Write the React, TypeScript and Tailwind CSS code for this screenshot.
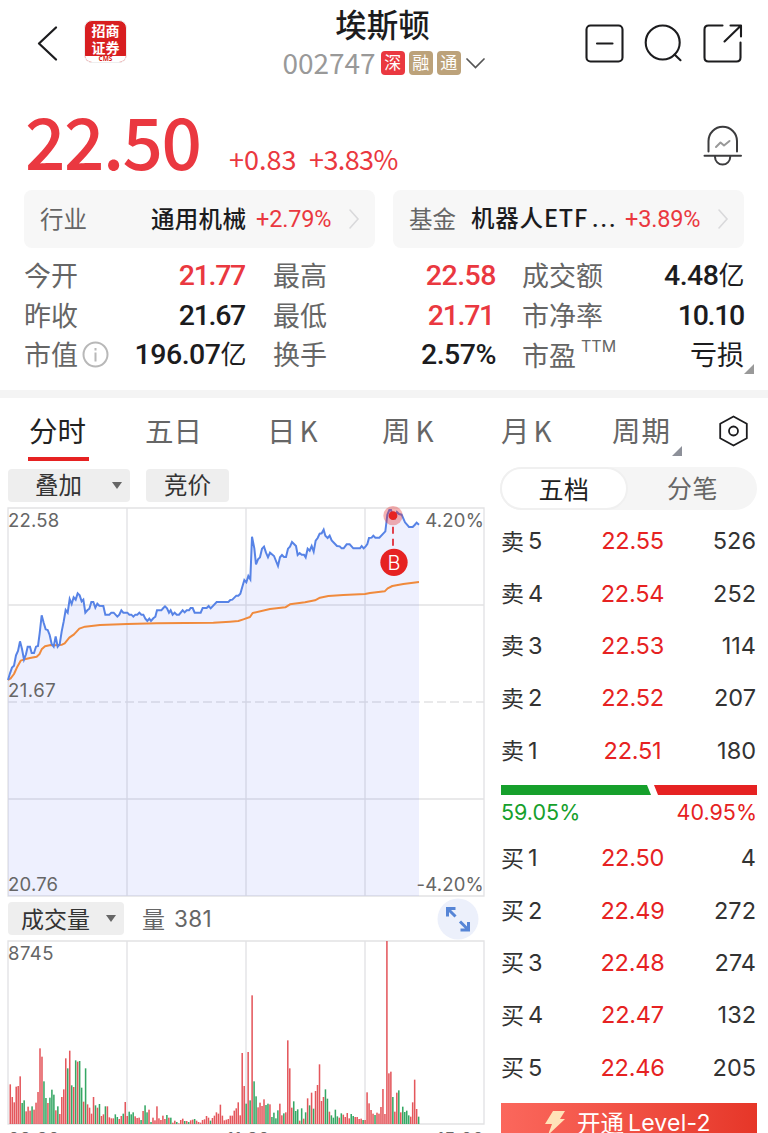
import React from 'react';

const PRICE =
  '24,540 30,520 36,503 42,497 48,466 54,453 60,424 66,447 72,479 78,463 83,440 90,440 95,459 102,459 108,440 114,438 119,400 125,346 131,368 137,388 143,390 149,405 155,432 161,440 167,409 173,440 179,433 185,395 191,365 197,330 203,338 209,297 215,312 221,292 227,299 233,280 239,286 245,304 250,299 256,338 262,331 268,326 274,306 280,306 286,323 292,311 298,317 310,318 316,344 328,344 334,338 341,338 352,350 358,344 364,331 370,338 382,338 388,344 394,344 400,350 406,344 412,344 418,338 424,344 430,344 436,356 442,363 448,356 453,363 460,355 466,350 471,331 484,331 490,324 495,319 501,325 507,338 512,331 518,344 524,338 530,344 537,344 548,331 554,337 560,331 567,331 572,324 578,324 584,338 602,338 608,324 620,324 626,318 632,325 650,306 685,306 691,300 697,299 709,287 715,287 721,281 727,260 733,240 739,247 745,228 751,238 756,110 763,145 768,193 774,178 780,172 786,146 792,140 798,158 804,172 810,158 822,168 834,198 840,172 846,165 852,171 858,171 864,146 870,140 876,126 882,132 888,138 893,165 899,159 905,164 912,164 917,172 923,146 929,152 935,138 941,155 947,122 953,114 959,101 965,100 971,89 976,107 983,114 989,107 995,121 1011,138 1019,139 1025,145 1031,145 1040,133 1049,133 1060,145 1080,145 1085,138 1091,145 1097,139 1102,132 1107,114 1115,113 1120,107 1126,113 1138,113 1156,94 1162,44 1168,30 1173,30 1179,50 1185,55 1191,36 1197,42 1205,44 1215,67 1227,81 1238,81 1244,75 1250,68 1257,74';

const AVERAGE =
  '24,540 32,535 42,522 52,500 62,482 74,478 90,474 110,470 118,463 125,448 135,439 152,435 165,436 186,434 194,430 208,413 222,403 238,386 255,380 300,375 382,372 470,370 640,368 690,365 715,363 730,358 750,351 758,339 810,327 856,322 870,313 915,307 945,301 960,293 985,288 1030,285 1095,282 1110,279 1154,274 1163,265 1177,258 1210,252 1257,246';

const VOLUME =
  '643r 681r 697r 650r 648r 619r 699g 691g 724r 710r 722r 709g 719r 698r 666r 535r 560r 634g 684g 699r 683g 659g 674g 721r 709g 732r 681r 658r 565r 595g 542r 646g 651r 571g 575r 573g 653g 695r 595g 703r 713r 731r 681r 706g 713r 702g 738r 733r 709g 709r 742r 745r 745r 733g 741g 747r 738r 731g 696r 738r 725g 733g 727g 739r 744r 743r 750g 723r 706g 727g 719r 756g 743r 751r 709r 745r 750r 737r 747r 735g 743r 743g 758r 752r 756g 760r 750r 746r 753g 753r 756g 751r 749r 747g 752r 756r 758r 750r 748r 738r 743r 752g 744r 737r 727r 731r 704r 737r 751r 749r 747r 737r 737r 722r 715r 697r 736r 549r 648r 701g 546r 691g 376r 634g 679g 712r 698r 708r 688r 705g 701g 703r 741g 728g 745g 721g 701r 736r 730g 727r 511r 595r 713r 694g 723g 718g 752r 715g 746r 727g 685r 706g 668r 716g 663r 645r 583r 693r 681r 658g 686g 725r 736g 743g 719g 739g 743r 730g 734r 741r 729r 745r 732g 738g 741r 741r 747r 746r 750g 750r 667r 700r 720r 731r 735g 728r 731r 711r 657r 732r 213r 610r 605r 681g 725r 668r 661g 727r 710g 726g 722g 736g 740r 697r 629r 717r 740g'.split(
    ' ',
  );

function Header() {
  return (
    <header className="flex h-[90px] items-start">
      <svg className="ml-[36px] mt-[24px] h-10 w-[24px]" viewBox="0 0 24 40" fill="none" stroke="#1c1c1e" strokeWidth="2.3" strokeLinecap="round" strokeLinejoin="round">
        <path d="M20 3.5 3 19.5 20 35.5" />
      </svg>
      <div className="ml-[24px] mt-[20px] flex h-[43px] w-[43px] flex-col overflow-hidden rounded-[8px] border border-[#eeeeee] bg-[#d81e20] text-center font-bold text-white">
        <div className="h-[35px] pt-[1px] text-[14px] leading-[16.5px]">
          招商
          <br />
          证券
        </div>
        <div className="flex-1 bg-white font-['Open_Sans'] text-[6.5px] leading-[6px] text-[#d81e20]">CMS</div>
      </div>
      <div className="ml-[128px] mt-[4px] flex w-[257px] flex-col items-center">
        <h1 className="-ml-[2px] h-[42px] text-[31.5px] font-medium leading-[39px] text-[#1c1c1e]">埃斯顿</h1>
        <div className="flex h-[34px] items-center">
          <span className="mr-[5px] text-[28px] leading-[30px] text-[#999]"><span className="relative -top-[1px]">002747</span></span>
          <span className="mr-[4px] h-6 w-6 rounded-[4px] bg-[#ea3840] text-center text-[17px] leading-[22px] text-white">深</span>
          <span className="mr-[4px] h-6 w-6 rounded-[4px] bg-[#bca27a] text-center text-[17px] leading-[22px] text-white">融</span>
          <span className="h-6 w-6 rounded-[4px] bg-[#bca27a] text-center text-[17px] leading-[22px] text-white">通</span>
          <svg className="ml-[4px] h-[12px] w-5" viewBox="0 0 20 12" fill="none" stroke="#555" strokeWidth="1.7" strokeLinecap="round">
            <path d="m2 2 8.5 8.5L19 2" />
          </svg>
        </div>
      </div>
      <svg className="ml-[72px] mt-[23px] h-[42px] w-[160px]" viewBox="584 23 160 42" fill="none" stroke="#1c1c1e" strokeWidth="2.1" strokeLinecap="round" strokeLinejoin="round">
        <rect x="586.5" y="25.5" width="36" height="36" rx="4" />
        <path d="M597 43.5h15.500" />
        <circle cx="662.700" cy="42.500" r="17" />
        <path d="m674.500 54.500 6 5.700" />
        <path d="M722.500 25.500h-14q-4 0-4 4v28q0 4 4 4h28q4 0 4-4v-15M741 36.500v-11h-10.500M740.500 26 724.500 41.500" />
      </svg>
    </header>
  );
}

function Quote() {
  return (
    <div className="flex h-[100px] items-start text-[#ea3840]">
      <div className="ml-[25px] mt-[4px] w-[204px] text-[71px] font-medium leading-[90px] tracking-[-1.5px]">22.50</div>
      <div className="mt-[51px] flex text-[27px] leading-[36px] tracking-[-0.3px]">
        <span className="w-[80px] tracking-normal">+0.83</span>
        <span className="tracking-[-0.6px]">+3.83%</span>
      </div>
      <svg className="ml-auto mr-[24px] mt-[34px] h-[44px] w-[42px]" viewBox="702 124 42 44" fill="none" stroke="#3c3c3e" strokeWidth="2" strokeLinecap="round" strokeLinejoin="round">
        <path d="M708.500 151.500V141a14 14 0 0 1 28.500 0v10.500M704.500 155.800h36.500M715 157a7.600 7.600 0 0 0 15.200 0" />
        <path d="m716 147 4.500-4.500 3.500 3 5.500-4.500" stroke="#999" />
      </svg>
    </div>
  );
}

function Arrow() {
  return (
    <svg className="h-[22px] w-[12px]" viewBox="0 0 12 22" fill="none" stroke="#d9d9db" strokeWidth="1.6" strokeLinecap="round">
      <path d="m2 2 8 9-8 9" />
    </svg>
  );
}

function Related() {
  return (
    <div className="flex h-[58px] gap-[18px] px-6 text-[23.5px] leading-[56px]">
      <div className="flex w-[351px] items-center rounded-[8px] bg-[#f7f7f7] pl-[16px] pr-[14px]">
        <span className="-mt-[2px] w-[111px] text-[#666]">行业</span>
        <span className="-mt-[2px] w-[105px] font-medium tracking-[0.3px] text-[#1c1c1e]">通用机械</span>
        <span className="w-[92px] font-[Roboto] leading-[58px] tracking-[-0.2px] text-[#ea3840]">+2.79%</span>
        <Arrow />
      </div>
      <div className="flex w-[351px] items-center rounded-[8px] bg-[#f7f7f7] pl-[16px] pr-[14px]">
        <span className="-mt-[2px] w-[62px] text-[#666]">基金</span>
        <span className="-mt-[2px] w-[154px] whitespace-nowrap font-medium tracking-[0.8px] text-[#1c1c1e]">机器人ETF<span className="ml-1 font-[Roboto] tracking-[2px]">...</span></span>
        <span className="w-[92px] font-[Roboto] leading-[58px] tracking-[-0.2px] text-[#ea3840]">+3.89%</span>
        <Arrow />
      </div>
    </div>
  );
}

function Stat({ label, value, red, extra, col }: { label: string; value: string; red?: boolean; extra?: React.ReactNode; col: string }) {
  const spacing = value.startsWith('21.') || value === '10.10' ? 'tracking-[-1.3px]' : 'tracking-[-0.5px]';
  return (
    <div className={`flex h-[39.500px] items-center justify-between ${col}`}>
      <span className="flex items-center text-[27px] leading-[37px] text-[#666]">
        <span className="-mt-[2px]">{label}</span>
        {extra}
      </span>
      <span className={`font-[Roboto,'Noto_Sans_CJK_SC'] text-[28.5px] font-medium leading-[39px] ${spacing} ${red ? 'text-[#ea3840]' : 'text-[#1c1c1e]'}`}>
        {value.replace('亿', '')}
        {value.endsWith('亿') && <span className="text-[26px] font-normal">亿</span>}
      </span>
    </div>
  );
}

function Stats() {
  return (
    <div className="relative flex h-[142px] pl-6 pt-[8px]">
      <div className="w-[249px]">
        <Stat col="w-[221px]" label="今开" value="21.77" red />
        <Stat col="w-[221px]" label="昨收" value="21.67" />
        <Stat
          col="w-[222px]"
          label="市值"
          value="196.07亿"
          extra={
            <svg className="ml-[4px] h-[27px] w-[27px]" viewBox="0 0 27 27" fill="none" stroke="#b8b8b8" strokeWidth="2">
              <circle cx="13.500" cy="13.500" r="12" />
              <path d="M13.500 11.500v9M13.500 7v2.500" />
            </svg>
          }
        />
      </div>
      <div className="w-[249px]">
        <Stat col="w-[223px]" label="最高" value="22.58" red />
        <Stat col="w-[221px]" label="最低" value="21.71" red />
        <Stat col="w-[223px]" label="换手" value="2.57%" />
      </div>
      <div className="w-[222px]">
        <Stat col="w-[222px]" label="成交额" value="4.48亿" />
        <Stat col="w-[222px]" label="市净率" value="10.10" />
        <div className="flex h-[39.500px] items-center justify-between">
          <span className="flex text-[27px] leading-[42px] text-[#666]">
            市盈<span className="ml-[5px] font-[Inter] text-[16px] leading-[25px]">TTM</span>
          </span>
          <span className="-mt-[2px] text-[27px] leading-[37px] text-[#1c1c1e]">亏损</span>
        </div>
      </div>
      <svg className="absolute left-[744px] top-[116px] h-[10px] w-[10px]" viewBox="0 0 10 10">
        <path d="M10 0v10H0z" fill="#999" />
      </svg>
    </div>
  );
}

function Tabs() {
  return (
    <nav className="flex h-[69px] pl-[29px] text-[28.5px] leading-[64px] text-[#666]">
      <div className="relative w-[116px] text-[#222]">
        分时
        <i className="absolute left-[-1px] top-[59px] h-[4px] w-[61px] bg-[#e62222]" />
      </div>
      <div className="w-[122px]">五日</div>
      <div className="w-[115px]">日<span className="ml-[4px] text-[28px]">K</span></div>
      <div className="w-[119px]">周<span className="ml-[5px] text-[28px]">K</span></div>
      <div className="w-[111px]">月<span className="ml-[4px] text-[28px]">K</span></div>
      <div className="relative w-[106px] tracking-[1px]">
        周期
        <svg className="absolute left-[60px] top-[48px] h-[10px] w-[10px]" viewBox="0 0 10 10">
          <path d="M10 0v10H0z" fill="#8d9099" />
        </svg>
      </div>
      <svg className="mt-[16px] h-[34px] w-[32px]" viewBox="0 0 32 34" fill="none" stroke="#1c1c1e" strokeWidth="1.8" strokeLinejoin="round">
        <path d="m15.500 2.500 13.300 7.200v14.600l-13.300 7.200-13.300-7.200V9.700z" />
        <circle cx="15.500" cy="17" r="4.500" />
      </svg>
    </nav>
  );
}

function Caret() {
  return (
    <svg className="h-[7px] w-[10px]" viewBox="0 0 10 7">
      <path d="M0 0h10L5 7z" fill="#666" />
    </svg>
  );
}

function PriceChart() {
  return (
    <div className="relative mt-[6px] h-[388px] w-[476px]">
      <svg className="h-full w-full overflow-visible" viewBox="24 24 1428 1164" fill="none">
        <path d="M24 315H1452M24 897H1452M381 24V1188M738 24V1188M1095 24V1188M24 24H1452V1188H24z" stroke="#e2e2e4" strokeWidth="4" />
        <path d="M24 606H1452" stroke="#e2e2e4" strokeWidth="4" strokeDasharray="27 12" />
        <polygon points={`24,1188 ${PRICE} 1257,1188`} fill="#5b6cf8" fillOpacity="0.100" />
        <polyline points={AVERAGE} stroke="#f08a3c" strokeWidth="6" strokeLinejoin="round" />
        <polyline points={PRICE} stroke="#5783e6" strokeWidth="6" />
        <circle cx="1179" cy="47" r="29" fill="#e62222" fillOpacity="0.350" />
        <path d="M1179 80v70" stroke="#e0202a" strokeWidth="5" strokeDasharray="21 15" />
        <circle cx="1179" cy="47" r="13" fill="#e62222" />
        <circle cx="1182" cy="187" r="41" fill="#e62222" />
      </svg>
      <div className="absolute left-[376px] top-[43px] w-5 text-center font-[Inter] text-[20px] font-light leading-6 text-white">B</div>
      <div className="absolute inset-0 flex flex-col justify-between font-[Inter] text-[18.5px] leading-[24px] text-[#666]">
        <div className="flex justify-between tracking-[0.2px]">
          <span>22.58</span>
          <span>4.20%</span>
        </div>
        <div className="-mt-[24px] tracking-[0.5px]">21.67</div>
        <div className="flex justify-between tracking-[0.2px]">
          <span>20.76</span>
          <span>-4.20%</span>
        </div>
      </div>
    </div>
  );
}

function VolumeChart() {
  return (
    <div className="relative mt-[6px] h-[183px] w-[476px]">
      <svg className="h-full w-full overflow-visible" viewBox="24 213 1428 549" fill="none">
        <path d="M381 213V762M738 213V762M1095 213V762M24 213H1452V762H24z" stroke="#e2e2e4" strokeWidth="4" />
        {VOLUME.map((v, i) => {
          const top = parseInt(v, 10);
          return <rect key={i} x={28.5 + 5.947 * i} y={top} width="4.600" height={762 - top} fill={v.endsWith('r') ? '#e4575c' : '#35a764'} />;
        })}
      </svg>
      <span className="absolute left-0 top-0 font-[Inter] text-[18.5px] leading-[24px] tracking-[0.5px] text-[#666]">8745</span>
    </div>
  );
}

function Chart() {
  return (
    <section className="w-[476px]">
      <div className="mt-[2px] flex h-[33px] gap-4 text-[23.5px] leading-[31px] text-[#333]">
        <div className="flex w-[122px] items-center justify-between rounded-[4px] bg-[#eeeeee] pl-[27px] pr-[8px]">
          <span className="-mt-[2px]">叠加</span>
          <Caret />
        </div>
        <div className="w-[83px] rounded-[4px] bg-[#eeeeee] text-center">竞价</div>
      </div>
      <PriceChart />
      <div className="mt-[6px] flex h-[33px] items-center text-[23px] leading-[32px]">
        <div className="flex h-[33px] w-[116px] items-center justify-between rounded-[4px] bg-[#eeeeee] pl-[13px] pr-[8px] text-[#333]">
          <span className="-mt-[2px]">成交量</span>
          <Caret />
        </div>
        <span className="-mt-[2px] ml-[18px] text-[#666]">量</span>
        <span className="ml-[9px] font-[Inter] text-[22.5px] tracking-[0.3px] text-[#666]">381</span>
        <svg className="-my-1 ml-auto mr-[5.500px] h-[42px] w-[42px]" viewBox="0 0 42 42" fill="none" stroke="#5685d6" strokeWidth="3">
          <circle cx="21" cy="21" r="20.500" fill="#ecf0fb" stroke="none" />
          <path d="M10.500 18.500v-8h8M11 11l7.500 7.500M31.500 24v8h-8M31 31.500l-8-8" />
        </svg>
      </div>
      <VolumeChart />
      <div className="mt-[3px] flex justify-between font-[Inter] text-[18.5px] leading-[24px] text-[#666]">
        <span>09:30</span>
        <span>11:30</span>
        <span>15:00</span>
      </div>
    </section>
  );
}

function Level({ side, n, price, qty }: { side: string; n: number; price: string; qty: number }) {
  return (
    <div className="flex h-[52.400px] items-center font-[Inter] text-[23.5px] leading-[30px] text-[#333]">
      <span className="-mt-[3px] w-[27px] font-['Noto_Sans_CJK_SC'] text-[23px]">{side}</span>
      <span className="w-[42px]">{n}</span>
      <span className="w-[125px] text-center tracking-[-0.2px] text-[#e62222]">{price}</span>
      <span className="ml-auto pr-[1px]">{qty}</span>
    </div>
  );
}

const SELL: [string, number][] = [['22.55', 526], ['22.54', 252], ['22.53', 114], ['22.52', 207], ['22.51', 180]];
const BUY: [string, number][] = [['22.50', 4], ['22.49', 272], ['22.48', 274], ['22.47', 132], ['22.46', 205]];

function OrderBook() {
  return (
    <section className="ml-[16px] w-[257px]">
      <div className="flex h-[43px] rounded-full bg-[#f5f5f5] text-center text-[25px] leading-[41px] tracking-[0.5px]">
        <div className="w-[128px] rounded-full border-2 border-[#f0f0f0] bg-white leading-[38px] text-[#222]">五档</div>
        <div className="flex-1 text-[#666]">分笔</div>
      </div>
      <div className="mt-[5px] pl-[1px]">
        {SELL.map(([p, q], i) => (
          <Level key={i} side="卖" n={5 - i} price={p} qty={q} />
        ))}
      </div>
      <svg className="mt-[8px] h-[10px] w-[257px]" viewBox="0 0 257 10">
        <path d="M1 0h146l4 10H1z" fill="#16a02c" />
        <path d="M154 0h103v10h-99z" fill="#e62222" />
      </svg>
      <div className="flex h-[34px] justify-between pl-[1px] font-[Inter] text-[21.5px] leading-[34px]">
        <span className="text-[#16a02c]">59.05%</span>
        <span className="text-[#e62222]">40.95%</span>
      </div>
      <div className="mt-[3px] pl-[1px]">
        {BUY.map(([p, q], i) => (
          <Level key={i} side="买" n={i + 1} price={p} qty={q} />
        ))}
      </div>
      <div className="ml-[1px] mt-[9px] flex h-[40px] items-center bg-gradient-to-r from-[#fb675c] to-[#e63628] pl-[44px] text-[23.5px] leading-[38px] text-white">
        <svg className="mr-[11px] h-[25px] w-[21px]" viewBox="0 0 21 25">
          <path d="M8 1h12l-5 8h5L3 25l4-11H0z" fill="#ffe3b8" />
        </svg>
        <span className="-mt-[2px]">开通</span>
        <span className="ml-[4px] font-[Inter] text-[23px] tracking-[0.2px]">Level-2</span>
      </div>
    </section>
  );
}

export default function App() {
  return (
    <div className="h-[1133px] w-[768px] overflow-hidden bg-white font-['Noto_Sans_CJK_SC',sans-serif]">
      <Header />
      <Quote />
      <Related />
      <Stats />
      <div className="h-[8px] bg-[#f4f4f4]" />
      <Tabs />
      <main className="flex pl-2">
        <Chart />
        <OrderBook />
      </main>
    </div>
  );
}
